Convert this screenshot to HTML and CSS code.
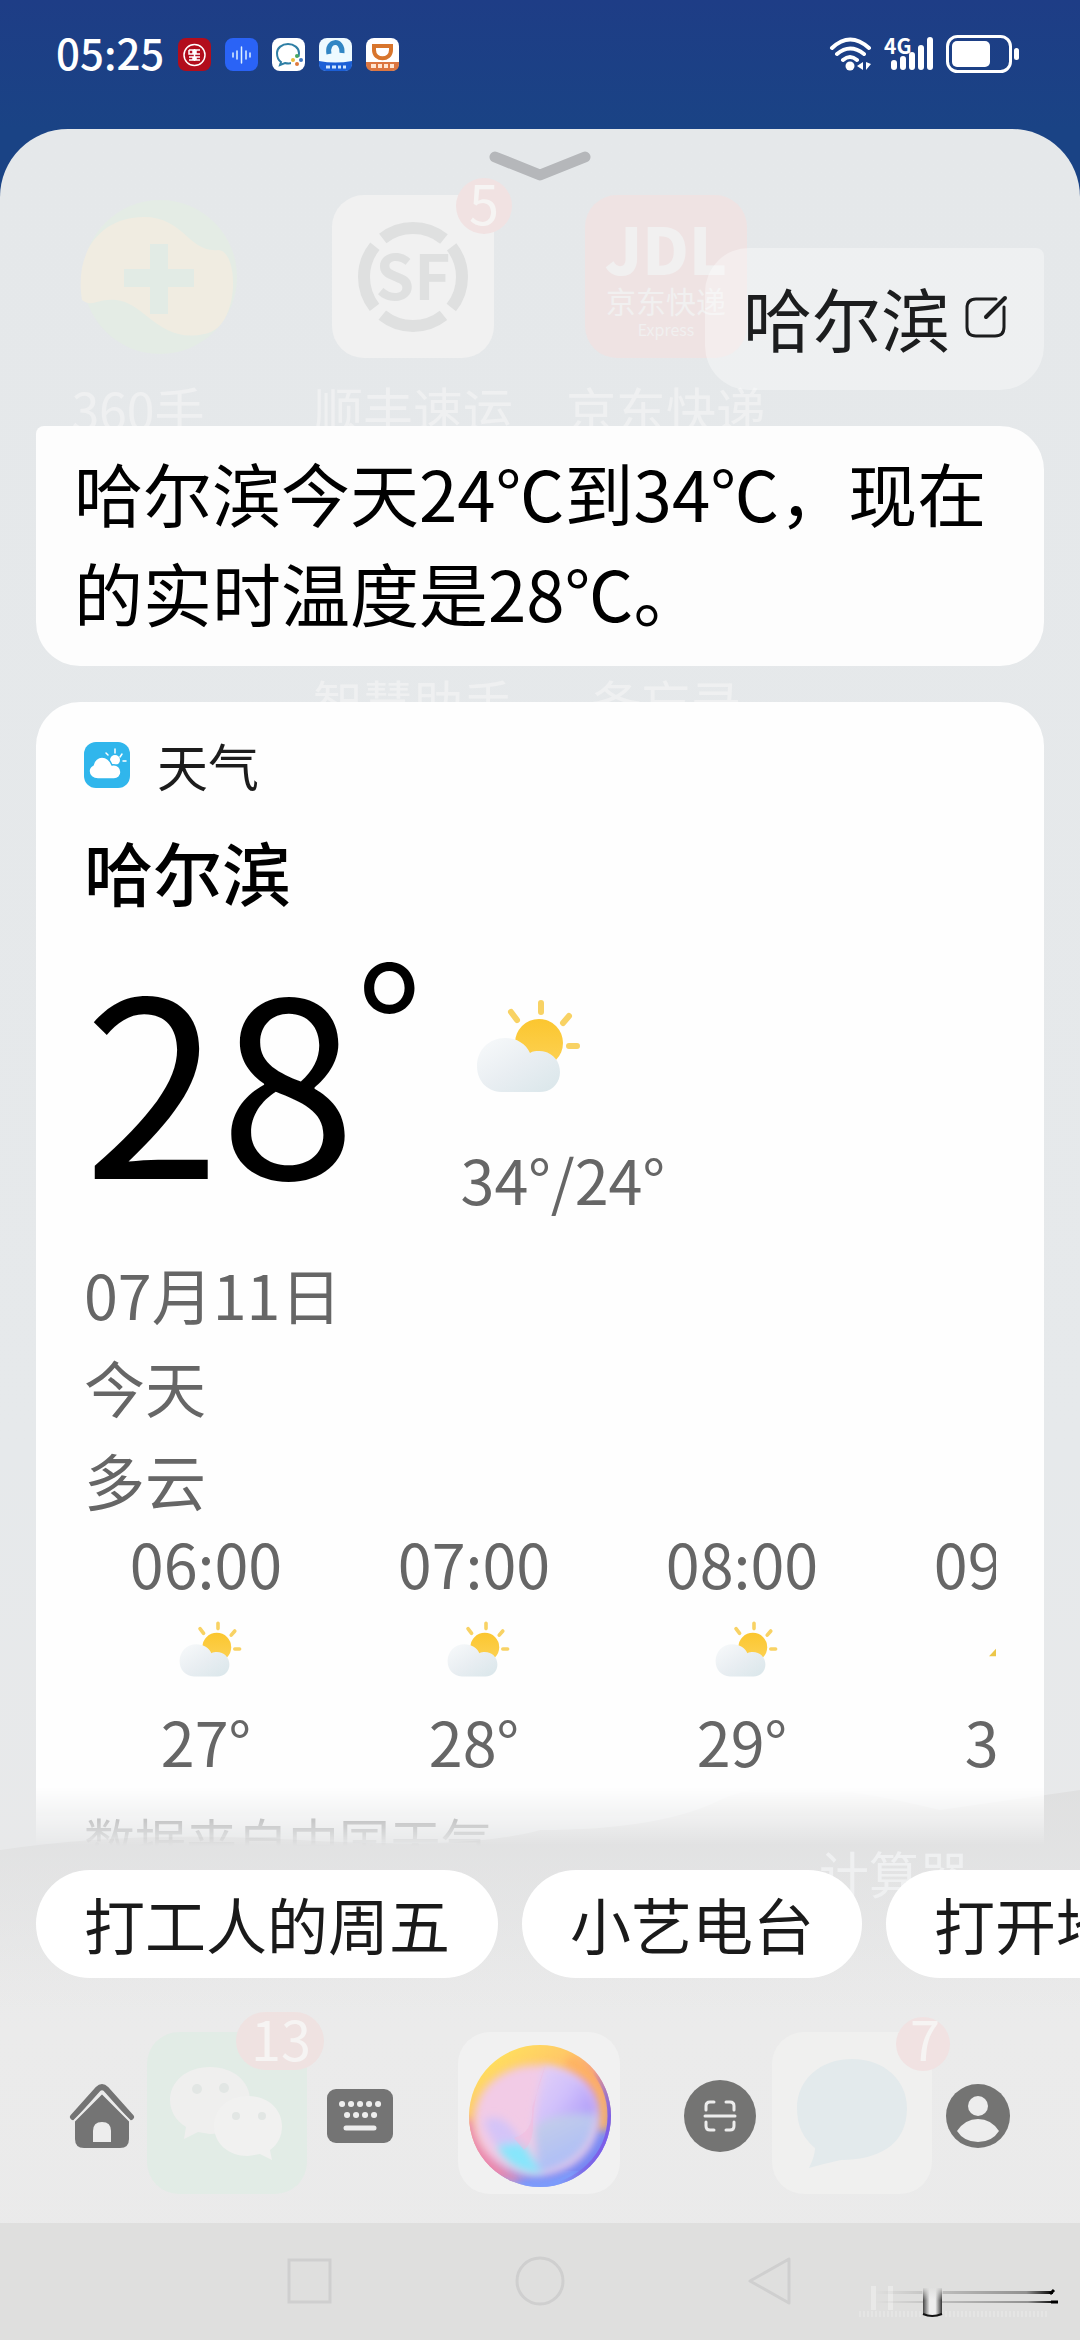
FILE: index.html
```html
<!DOCTYPE html>
<html lang="zh-CN">
<head>
    <meta charset="UTF-8">
    <meta name="viewport" content="width=device-width, initial-scale=1.0">
    <title>哈尔滨天气</title>
    <link rel="stylesheet" href="styles.css">
</head>
<body>
    <!-- shared weather icons -->
    <svg class="defs" aria-hidden="true">
        <defs>
            <linearGradient id="sunFill" x1="0" y1="0" x2="0" y2="1">
                <stop offset="0" stop-color="#fbc62f"/>
                <stop offset="1" stop-color="#fdd255"/>
            </linearGradient>
            <linearGradient id="cloudFill" x1="0" y1="0" x2="1" y2="1">
                <stop offset="0" stop-color="#f8fafb"/>
                <stop offset="0.5" stop-color="#e9eef2"/>
                <stop offset="1" stop-color="#d9e6ea"/>
            </linearGradient>
            <g id="cloudy">
                <circle cx="62" cy="43" r="24" fill="url(#sunFill)"/>
                <path d="M64 3v9M34 12l6 8M92 16l-6 7M92 46h8" stroke="#f8d264" stroke-width="6" stroke-linecap="round" fill="none"/>
                <path d="M24 92C9 91 0 80 0 66c0-16 12-28 28-28 12 0 21 6 25 15 3-2 6-2 9-2 12 0 21 9 21 21 0 11-8 20-20 20z" fill="url(#cloudFill)"/>
            </g>
            <g id="sunrise">
                <path d="M15 58l15-16q20-18 40 0l15 16z" fill="#ecc648"/>
                <path d="M50 10v10M72 16l-6 8" stroke="#edc84e" stroke-width="6" stroke-linecap="round" fill="none"/>
            </g>
        </defs>
    </svg>

    <div class="phone">
        <header class="status-bar">
            <div class="status-left">
                <time>05:25</time>
                <svg class="app" viewBox="0 0 33 33">
                    <rect width="33" height="33" rx="8" fill="#b20d1c"/>
                    <circle cx="16.500" cy="17" r="10.500" fill="none" stroke="#fff" stroke-width="1.500"/>
                    <path d="M11 12h4v4h-4v-4M22 12h-4v4h4M11 19h4v3h-4M22 19h-4v3h4M16.500 11v12" fill="none" stroke="#fff" stroke-width="1.500"/>
                </svg>
                <svg class="app" viewBox="0 0 33 33">
                    <rect width="33" height="33" rx="8" fill="#2a63f6"/>
                    <path d="M8 15v4M12 13v8M16.500 9v16M21 13v8M25 15v4" stroke="#dff2ff" stroke-width="1.500" stroke-linecap="round"/>
                </svg>
                <svg class="app" viewBox="0 0 33 33">
                    <rect width="33" height="33" rx="8" fill="#fff"/>
                    <path d="M9 24l-1 3 5-2c8 2 14-3 14-10 0-5-5-9-11-9S5 10 5 15c0 4 1 7 4 9z" fill="none" stroke="#2f7fa5" stroke-width="2"/>
                    <path d="M19 19h9v8h-9z" fill="#fff"/>
                    <circle cx="25" cy="18" r="2" fill="#48a860"/>
                    <circle cx="21" cy="22" r="2" fill="#e9bd3d"/>
                    <circle cx="29" cy="22" r="2" fill="#3f78c0"/>
                    <circle cx="25" cy="26" r="2" fill="#e07a3c"/>
                </svg>
                <svg class="app" viewBox="0 0 33 33">
                    <rect width="33" height="33" rx="8" fill="#eefaff"/>
                    <path d="M10 16c-3-14 14-16 13-1" fill="none" stroke="#3186c4" stroke-width="5"/>
                    <path d="M0 23q16 3 33 0v3q0 7-7 7H7q-7 0-7-7z" fill="#1b5fd6"/>
                    <path d="M7 29h4M13 29h4M19 29h3M24 29h3" stroke="#cfe6ff" stroke-width="3"/>
                </svg>
                <svg class="app" viewBox="0 0 33 33">
                    <rect width="33" height="33" rx="8" fill="#fff"/>
                    <path d="M8 8h17v4c0 11-17 11-17 0z" fill="none" stroke="#d8752c" stroke-width="4"/>
                    <path d="M0 24h33v2q0 7-7 7H7q-7 0-7-7z" fill="#dc7641"/>
                    <path d="M5 28h5M12 28h4M18 28h4M24 28h4" stroke="#ffe5d2" stroke-width="4"/>
                </svg>
            </div>
            <div class="status-right">
                <svg width="46" height="38" viewBox="0 0 46 38">
                    <path d="M4 13Q22-4 41 13M9 19q13-11 27 0M15 25q7-6 14 0" fill="none" stroke="#fff" stroke-width="4" stroke-linecap="round"/>
                    <circle cx="22" cy="31" r="4.500" fill="#fff"/>
                    <path d="M35 27v8l-6-4zM38 27v8l5-6z" fill="#fff"/>
                </svg>
                <svg width="52" height="38" viewBox="0 0 52 38">
                    <text x="0" y="19" class="network">4G</text>
                    <path d="M10 28v4M19 24v8M28 20v12M37 13v19M46 5v27" stroke="#fff" stroke-width="6" stroke-linecap="round"/>
                </svg>
                <svg width="74" height="38" viewBox="0 0 74 38">
                    <rect x="1.500" y="1.500" width="63" height="35" rx="10" fill="none" stroke="#fff" stroke-width="3"/>
                    <rect x="6" y="6" width="38" height="26" rx="5" fill="#fff"/>
                    <rect x="68" y="13" width="5" height="12" rx="2.500" fill="#fff"/>
                </svg>
            </div>
        </header>

        <main class="sheet">
            <!-- home screen shining through the sheet -->
            <svg class="backdrop" viewBox="0 129 1080 2211" preserveAspectRatio="xMidYMin slice" aria-hidden="true">
                <defs>
                    <linearGradient id="hill" x1="0" y1="0" x2="0" y2="1">
                        <stop offset="0" stop-color="#dcdcdc" stop-opacity=".7"/>
                        <stop offset="1" stop-color="#dcdcdc" stop-opacity="0"/>
                    </linearGradient>
                </defs>
                <circle cx="160" cy="277" r="77" fill="#e4ece5"/>
                <path d="M82 300c-8-50 20-83 62-83 40 0 45 36 74 33 22 0 22 80-14 84-44 10-60-32-88-34-18-2-24 8-34 0z" fill="#f0ece1"/>
                <path d="M159 244v70M124 278h70" stroke="#e2ebe5" stroke-width="18"/>
                <rect x="332" y="195" width="162" height="163" rx="32" fill="#f1f1f1"/>
                <circle cx="413" cy="277" r="49" fill="none" stroke="#dfe0e0" stroke-width="12" stroke-dasharray="66 11" stroke-dashoffset="33"/>
                <text x="413" y="300" class="logo">SF</text>
                <circle cx="484" cy="206" r="28" fill="#f1e2e2"/>
                <text x="484" y="225" class="badge">5</text>
                <rect x="585" y="195" width="162" height="163" rx="32" fill="#efe3e3"/>
                <text x="666" y="275" class="jdl">JDL</text>
                <text x="666" y="313" class="jdl-small">京东快递</text>
                <text x="666" y="336" class="jdl-tiny">Express</text>
                <g class="label">
                    <text x="138" y="430">360手</text>
                    <text x="413" y="430">顺丰速运</text>
                    <text x="666" y="430">京东快递</text>
                    <text x="413" y="723">智慧助手</text>
                    <text x="666" y="723">备忘录</text>
                </g>
                <path d="M0 1850q130-20 300-10t240-10q120 0 180-30t220 10l140-20v220H0z" fill="url(#hill)"/>
                <text x="894" y="1894" class="label">计算器</text>
                <rect x="147" y="2032" width="160" height="162" rx="32" fill="#e2ece6"/>
                <path d="M210 2067c24 0 40 15 40 33s-16 34-40 34l-12-2-14 7 2-12c-10-6-16-16-16-27 0-18 16-33 40-33z" fill="#efefee"/>
                <path d="M248 2096c20 0 34 13 34 30 0 10-4 18-12 24l2 10-12-6-12 2c-20 0-34-13-34-30s14-30 34-30z" fill="#f1f1f0"/>
                <g fill="#e2e6e4"><circle cx="197" cy="2089" r="5"/><circle cx="224" cy="2088" r="5"/><circle cx="236" cy="2116" r="4"/><circle cx="262" cy="2116" r="4"/></g>
                <rect x="236" y="2012" width="88" height="58" rx="29" fill="#efe2e1"/>
                <text x="281" y="2061" class="badge">13</text>
                <rect x="458" y="2032" width="162" height="162" rx="32" fill="#f1f1f1"/>
                <rect x="772" y="2032" width="160" height="162" rx="32" fill="#f0f0ef"/>
                <path d="M852 2059c32 0 55 21 55 49 0 38-30 52-66 52q-18 4-32 8 6-12 6-20c-12-10-18-22-18-40 0-28 23-49 55-49z" fill="#e3eaec"/>
                <circle cx="923" cy="2044" r="27" fill="#f1e2e2"/>
                <text x="925" y="2061" class="badge">7</text>
            </svg>

            <button class="collapse" aria-label="收起">
                <svg width="104" height="32" viewBox="0 0 104 32">
                    <path d="M7 8l45 18L97 8" fill="none" stroke="#b5b7ba" stroke-width="11" stroke-linecap="round" stroke-linejoin="round"/>
                </svg>
            </button>

            <section class="chat">
                <div class="question">
                    <span>哈尔滨</span>
                    <button aria-label="编辑">
                        <svg width="44" height="44" viewBox="0 0 44 44" fill="none" stroke="#1c1d1e" stroke-linecap="round">
                            <path d="M32 4H12Q3 4 3 13v19q0 9 9 9h19q9 0 9-9V12" stroke-width="3"/>
                            <path d="M22 22L41 3" stroke-width="4"/>
                        </svg>
                    </button>
                </div>

                <p class="answer">哈尔滨今天24℃到34℃，现在的实时温度是28℃。</p>

                <article class="card">
                    <div class="card-head">
                        <svg width="46" height="46" viewBox="0 0 46 46">
                            <rect width="46" height="46" rx="12" fill="#30b6ec"/>
                            <path d="M31 7v4M24 13l-2-2M38 12l-2 3M39 19h3" stroke="#fff" stroke-width="1.500" stroke-linecap="round"/>
                            <circle cx="31" cy="18" r="5" fill="#fff"/>
                            <path d="M14 37c-5 0-9-3-9-8 0-3 2-5 4-6 1-5 5-8 9-8 5 0 8 3 10 8 6-1 9 3 9 7s-3 7-7 7z" fill="#fff" stroke="#30b6ec" stroke-width="1.500"/>
                        </svg>
                        <span>天气</span>
                    </div>
                    <h1>哈尔滨</h1>

                    <div class="now">
                        <div class="temp">28<sup>°</sup></div>
                        <div class="range">
                            <svg width="104" height="92" viewBox="0 0 104 92"><use href="#cloudy"/></svg>
                            <span>34°/24°</span>
                        </div>
                    </div>

                    <div class="info">
                        <div>07月11日</div>
                        <div>今天</div>
                        <div>多云</div>
                    </div>

                    <ul class="hours">
                        <li>
                            <time>06:00</time>
                            <svg viewBox="-16 -14 120 120"><use href="#cloudy"/></svg>
                            <span>27°</span>
                        </li>
                        <li>
                            <time>07:00</time>
                            <svg viewBox="-16 -14 120 120"><use href="#cloudy"/></svg>
                            <span>28°</span>
                        </li>
                        <li>
                            <time>08:00</time>
                            <svg viewBox="-16 -14 120 120"><use href="#cloudy"/></svg>
                            <span>29°</span>
                        </li>
                        <li>
                            <time>09:00</time>
                            <svg viewBox="-10 -14 120 120"><use href="#sunrise"/></svg>
                            <span>30°</span>
                        </li>
                    </ul>
                    <p class="source">数据来自中国天气</p>
                </article>
            </section>

            <div class="chips">
                <button>打工人的周五</button>
                <button>小艺电台</button>
                <button>打开地图</button>
            </div>

            <nav class="dock">
                <button aria-label="主页">
                    <svg width="66" height="66" viewBox="0 0 66 66">
                        <path d="M4 34L29 6q4-4 8 0l25 28" fill="none" stroke="#747474" stroke-width="6" stroke-linecap="round"/>
                        <path d="M6 36L33 10l27 26v20q0 9-9 9H15q-9 0-9-9z" fill="#747474"/>
                        <path d="M5 38L33 10l28 28" fill="none" stroke="#ededed" stroke-width="2"/>
                        <path d="M24 59V48q0-9 9-9t9 9v11z" fill="#ededed"/>
                    </svg>
                </button>
                <div class="dock-middle">
                    <button aria-label="键盘">
                        <svg width="72" height="72" viewBox="-3 -3 72 72">
                            <rect y="6" width="66" height="54" rx="9" fill="#747474"/>
                            <path d="M15 21h.1M24 21h.1M33 21h.1M42 21h.1M51 21h.1M20 32h.1M29 32h.1M38 32h.1M47 32h.1" stroke="#ededed" stroke-width="6" stroke-linecap="round"/>
                            <path d="M19 45h28" stroke="#ededed" stroke-width="5" stroke-linecap="round"/>
                        </svg>
                    </button>
                    <button aria-label="语音">
                        <svg width="144" height="144" viewBox="0 0 144 144">
                            <defs>
                                <linearGradient id="orbRim" x1="0.100" y1="0" x2="0.800" y2="1">
                                    <stop offset="0" stop-color="#ffe95a"/>
                                    <stop offset="0.350" stop-color="#ffc568"/>
                                    <stop offset="0.550" stop-color="#ea86a8"/>
                                    <stop offset="0.800" stop-color="#7a8cf5"/>
                                    <stop offset="1" stop-color="#6f7ff0"/>
                                </linearGradient>
                                <linearGradient id="orbEdge" x1="0" y1="0.200" x2="1" y2="0.500">
                                    <stop offset="0.800" stop-color="#8a66d8" stop-opacity="0"/>
                                    <stop offset="1" stop-color="#7d5ee8"/>
                                </linearGradient>
                                <linearGradient id="orbRight" x1="0" y1="0" x2="1" y2="0.800">
                                    <stop offset="0" stop-color="#e6d2f6"/>
                                    <stop offset="0.500" stop-color="#d0c0fb"/>
                                    <stop offset="1" stop-color="#a994f8"/>
                                </linearGradient>
                                <linearGradient id="orbLow" x1="0" y1="0" x2="0.500" y2="1">
                                    <stop offset="0" stop-color="#c8d0e6"/>
                                    <stop offset="1" stop-color="#a9bbfa"/>
                                </linearGradient>
                                <filter id="soft" x="-20%" y="-20%" width="140%" height="140%"><feGaussianBlur stdDeviation="4"/></filter>
                                <clipPath id="orbClip"><circle cx="72" cy="72" r="71"/></clipPath>
                            </defs>
                            <g clip-path="url(#orbClip)">
                                <rect width="144" height="144" fill="url(#orbRim)"/>
                                <path d="M-2 76q4 40 50 66" fill="none" stroke="#ea86aa" stroke-width="16" filter="url(#soft)"/>
                                <path d="M100 16q44 24 34 70" fill="none" stroke="#ffb45e" stroke-width="12" filter="url(#soft)"/>
                                <path d="M30 138q40 14 80-8" fill="none" stroke="#7fa6ff" stroke-width="8" filter="url(#soft)"/>
                                <ellipse cx="68" cy="76" rx="62" ry="55" fill="#f2cbe6" filter="url(#soft)"/>
                                <g filter="url(#soft)">
                                    <path d="M76 22q-10 40-10 70l62-14q6-46-52-56z" fill="url(#orbRight)"/>
                                    <path d="M66 86q8-18 62-16-2 46-58 60z" fill="url(#orbLow)"/>
                                    <path d="M16 76q20-10 36 20l18 30Q26 116 16 76z" fill="#d4c4f8"/>
                                    <path d="M28 102q18-4 28-2l18 30q-30 0-46-28z" fill="#86e6fc"/>
                                </g>
                                <path d="M78 20q-14 34-13 66-2 14-9 20l-10-12q20-6 18-30z" fill="#f2b9dd" opacity=".5"/>
                                <circle cx="72" cy="72" r="70" fill="none" stroke="url(#orbEdge)" stroke-width="5"/>
                            </g>
                        </svg>
                    </button>
                    <button aria-label="扫一扫">
                        <svg width="72" height="72" viewBox="0 0 72 72">
                            <circle cx="36" cy="36" r="36" fill="#747473"/>
                            <path d="M22 30v-4q0-4 4-4h4M42 22h4q4 0 4 4v4M22 42v4q0 4 4 4h4M42 50h4q4 0 4-4v-4M21 36h30" fill="none" stroke="#ededed" stroke-width="3" stroke-linecap="round"/>
                        </svg>
                    </button>
                </div>
                <button aria-label="我的">
                    <svg width="66" height="66" viewBox="0 0 66 66">
                        <circle cx="33" cy="33" r="32" fill="#747473"/>
                        <circle cx="33" cy="23" r="10" fill="#ededed"/>
                        <path d="M12 48q8-12 21-12t21 12q-7 11-21 11T12 48z" fill="#ededed"/>
                    </svg>
                </button>
            </nav>

            <footer class="system-nav">
                <button aria-label="最近任务">
                    <svg width="52" height="52" viewBox="0 0 52 52"><rect x="5" y="5" width="41" height="42" fill="none" stroke="#cfcfcf" stroke-width="3"/></svg>
                </button>
                <button aria-label="桌面">
                    <svg width="52" height="52" viewBox="0 0 52 52"><circle cx="26" cy="26" r="23" fill="none" stroke="#cfcfcf" stroke-width="3"/></svg>
                </button>
                <button aria-label="返回">
                    <svg width="52" height="52" viewBox="0 0 52 52"><path d="M45 4v44L6 26z" fill="none" stroke="#cfcfcf" stroke-width="3" stroke-linejoin="round"/></svg>
                </button>
                <svg class="smudge" width="210" height="44" viewBox="0 0 210 44" aria-hidden="true">
                    <defs>
                        <linearGradient id="streak"><stop offset="0" stop-color="#000" stop-opacity="0"/><stop offset="0.850" stop-color="#000" stop-opacity=".35"/><stop offset="1" stop-color="#000"/></linearGradient>
                        <linearGradient id="tube"><stop offset="0" stop-color="#444"/><stop offset="0.350" stop-color="#eee"/><stop offset="0.650" stop-color="#eee"/><stop offset="1" stop-color="#333"/></linearGradient>
                        <linearGradient id="tubeFade" x1="0" y1="0" x2="0" y2="1"><stop offset="0" stop-color="#dfdfde"/><stop offset="0.500" stop-color="#dfdfde" stop-opacity="0"/></linearGradient>
                    </defs>
                    <rect x="16" y="8" width="5" height="24" fill="#e9e9e8"/>
                    <rect x="33" y="8" width="5" height="24" fill="#e9e9e8"/>
                    <path d="M4 36h64M90 36h104" stroke="#e5e5e4" stroke-width="6" stroke-dasharray="2 2"/>
                    <rect x="20" y="13" width="178" height="3" fill="url(#streak)"/>
                    <rect x="20" y="23" width="180" height="2" fill="url(#streak)"/>
                    <path d="M68 10h19v26q-9 5-19 0z" fill="url(#tube)"/>
                    <rect x="67" y="9" width="21" height="27" fill="url(#tubeFade)"/>
                    <path d="M68 36q9 4 19 0" fill="none" stroke="#111" stroke-width="2"/>
                    <path d="M195 16l4-4M196 24h7" stroke="#000" stroke-width="3"/>
                </svg>
            </footer>
        </main>
    </div>
</body>
</html>
```
FILE: styles.css
```css
* {
    box-sizing: border-box;
}
body {
    margin: 0;
    font-family: "Noto Sans CJK SC", "Noto Sans", sans-serif;
    background: #1c4186;
    color: #000;
}
svg {
    display: block;
    flex: none;
}
button {
    border: none;
    padding: 0;
    background: none;
    font: inherit;
    color: inherit;
}
.defs {
    position: absolute;
    width: 0;
    height: 0;
}
.phone {
    display: flex;
    flex-direction: column;
    height: 100vh;
    background: linear-gradient(#1e3d86, #1a4385 129px);
}

/* status bar */
.status-bar {
    display: flex;
    justify-content: space-between;
    height: 129px;
    padding: 34px 60px 0 56px;
    color: #fff;
}
.status-left, .status-right {
    display: flex;
    align-items: center;
    height: 40px;
}
.status-left {
    gap: 14px;
}
.status-left time {
    font-size: 42px;
    font-weight: 500;
    line-height: 36px;
    padding-bottom: 4px;
}
.app {
    width: 33px;
    height: 33px;
}
.status-right {
    gap: 10px;
}
.network {
    font-size: 21px;
    font-weight: 700;
    fill: #fff;
}

/* sheet */
.sheet {
    position: relative;
    display: flex;
    flex-direction: column;
    flex: 1;
    min-height: 0;
    overflow: hidden;
    border-radius: 68px 68px 0 0;
    background: linear-gradient(#e5e8ea, #e6e9eb 60%, #e8e9ea 78%, #ebebeb 86%, #eaeaea);
}
.sheet > * {
    position: relative;
}
.sheet > .backdrop {
    position: absolute;
    top: 0;
    left: 0;
    width: 100%;
    height: 100%;
}
.backdrop text {
    text-anchor: middle;
}
.label {
    font-size: 50px;
    fill: #eff0f1;
}
.badge {
    font-size: 54px;
    fill: #f6f4f3;
}
.logo {
    font-size: 62px;
    font-weight: 700;
    fill: #dfe0e0;
}
.jdl {
    font-size: 64px;
    font-weight: 900;
    fill: #f1f0f0;
}
.jdl-small {
    font-size: 30px;
    fill: #f1f0f0;
}
.jdl-tiny {
    font-size: 16px;
    fill: #f1f0f0;
}
.collapse {
    align-self: center;
    padding: 20px 20px 0;
}
.chat {
    display: flex;
    flex-direction: column;
    flex: 1;
    gap: 36px;
    min-height: 0;
    margin-bottom: 24px;
    padding: 67px 36px 0;
    overflow: hidden;
    mask-image: linear-gradient(#000 calc(100% - 60px), transparent);
}
.question {
    display: flex;
    align-items: center;
    align-self: flex-end;
    gap: 14px;
    height: 142px;
    padding: 0 36px 4px 38px;
    border-radius: 44px 8px 44px 44px;
    background: rgba(255, 255, 255, 0.35);
    font-size: 69px;
    line-height: 100px;
    color: #1c1d1e;
}
.answer {
    margin: 0;
    padding: 16px 36px 24px 38px;
    border-radius: 8px 44px 44px 44px;
    background: #fdfdfd;
    font-size: 69px;
    line-height: 100px;
}
.card {
    flex: 1;
    min-height: 0;
    padding: 31px 48px 0;
    overflow: hidden;
    border-radius: 44px 44px 0 0;
    background: #fefefe;
}
.card-head {
    display: flex;
    align-items: center;
    gap: 27px;
    height: 64px;
    font-size: 51px;
    line-height: 62px;
    color: #1c1c1c;
}
.card h1 {
    margin: 28px 0 0;
    font-size: 69px;
    font-weight: 500;
    line-height: 92px;
}
.now {
    display: flex;
    gap: 38px;
    height: 270px;
    margin-top: 34px;
}
.temp {
    display: flex;
    font-size: 245px;
    line-height: 244px;
}
.temp sup {
    font-size: 180px;
    line-height: 142px;
}
.range {
    display: flex;
    flex-direction: column;
    gap: 50px;
    padding-top: 49px;
}
.range svg {
    margin-left: 16px;
}
.range, .info, .hours {
    font-size: 61px;
    line-height: 74px;
    color: #666;
}
.info {
    margin-top: 26px;
    line-height: 93px;
}
.hours {
    display: flex;
    gap: 24px;
    margin: 0;
    padding: 0;
    overflow: hidden;
    list-style: none;
}
.hours li {
    display: flex;
    flex: none;
    flex-direction: column;
    align-items: center;
    width: 244px;
}
.hours svg {
    width: 72px;
    height: 72px;
    margin: 13px 0 19px;
}
.source {
    margin: 32px 0 0;
    font-size: 51px;
    line-height: 60px;
    color: #999;
}

/* suggestions */
.chips {
    display: flex;
    gap: 24px;
    padding-left: 36px;
    overflow: hidden;
}
.chips button {
    flex: none;
    height: 108px;
    padding: 0 48px;
    border-radius: 54px;
    background: #fff;
    font-size: 61px;
    line-height: 106px;
    color: #1a1a1a;
}

/* bottom bars */
.dock {
    display: flex;
    align-items: center;
    justify-content: space-between;
    height: 245px;
    padding: 31px 69px 0;
}
.dock-middle {
    display: flex;
    align-items: center;
    gap: 72px;
}
.system-nav {
    display: flex;
    align-items: flex-start;
    justify-content: center;
    gap: 178px;
    height: 117px;
    padding-top: 32px;
    background: #dfdfde;
}
.smudge {
    position: absolute;
    right: 15px;
    bottom: 18px;
}
```
